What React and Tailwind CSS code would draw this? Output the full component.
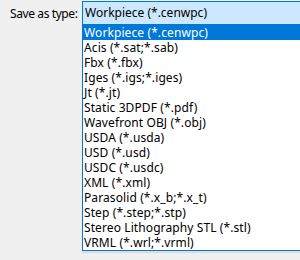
import React from "react";

const types = [
  "Workpiece (*.cenwpc)",
  "Acis (*.sat;*.sab)",
  "Fbx (*.fbx)",
  "Iges (*.igs;*.iges)",
  "Jt (*.jt)",
  "Static 3DPDF (*.pdf)",
  "Wavefront OBJ (*.obj)",
  "USDA (*.usda)",
  "USD (*.usd)",
  "USDC (*.usdc)",
  "XML (*.xml)",
  "Parasolid (*.x_b;*.x_t)",
  "Step (*.step;*.stp)",
  "Stereo Lithography STL (*.stl)",
  "VRML (*.wrl;*.vrml)",
];

export default function App() {
  const selected = 0;

  return (
    <div className="w-[300px] h-[260px] overflow-hidden bg-[#f0f0f0] text-[12px] text-black font-['Noto_Sans',sans-serif] pt-px">
      <div className="flex">
        {/* Label */}
        <div className="w-[82px] shrink-0 pl-[10px] pt-[3px] leading-[20px] whitespace-nowrap tracking-[-0.4px]">Save as type:</div>

        {/* Combo + open list */}
        <div className="w-[240px] shrink-0 whitespace-nowrap">
          <div className="h-[24px] border border-[#0078d7] bg-[#cce8ff] pl-[2px] leading-[22px]">
            {types[selected]}
          </div>
          <div className="border border-t-0 border-[#0078d7] bg-white shadow-[0_2px_1px_rgba(0,0,0,0.08)]">
            {types.map((t, i) => (
              <div
                key={t}
                className={
                  i === selected
                    ? "h-[15px] leading-[15px] pl-px tracking-[0.1px] bg-[#0078d7] text-white"
                    : "h-[15px] leading-[15px] pl-px tracking-[0.1px]"
                }
              >
                {t}
              </div>
            ))}
          </div>
        </div>
      </div>
    </div>
  );
}
